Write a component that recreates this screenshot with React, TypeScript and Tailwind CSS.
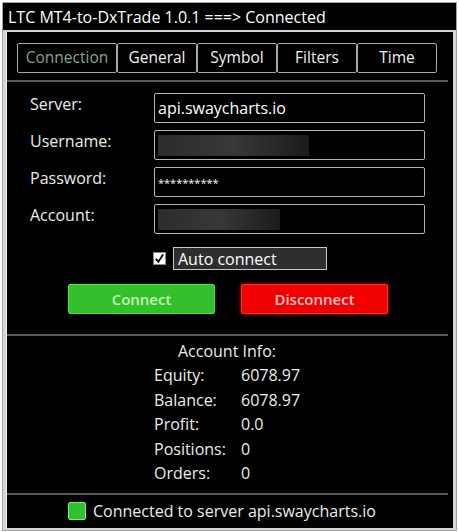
import React from 'react';

const tabs = ['Connection', 'General', 'Symbol', 'Filters', 'Time'];

const info = [
    ['Equity:', '6078.97'],
    ['Balance:', '6078.97'],
    ['Profit:', '0.0'],
    ['Positions:', '0'],
    ['Orders:', '0'],
];

function Field({ label, children }: { label: string; children?: React.ReactNode }) {
    return (
        <div className="flex items-start h-[30px]">
            <div className="w-[124px] text-[16px] leading-[22px] text-[#ececec]">{label}</div>
            <div className="w-[271px] h-[30px] border border-[#b4b4b4] rounded-[2px] bg-black flex items-center px-[3px] text-white text-[16px]">
                {children}
            </div>
        </div>
    );
}

function Hidden({ width }: { width: string }) {
    // redacted value in the original
    return <div className={`h-[21px] ${width} bg-gradient-to-r from-[#2c2c2c] via-[#383838] to-[#1c1c1c] blur-[0.6px]`} />;
}

export default function App() {
    return (
        <div className="min-h-screen bg-white p-[2px]" style={{ fontFamily: '"Open Sans", "DejaVu Sans", sans-serif' }}>
            <div className="w-[455px] h-[529px] border border-[#a4a4a4] bg-[#d6d6d6] flex flex-col">
                {/* Title bar */}
                <div className="h-[27px] bg-black text-white text-[16px] flex items-center pl-[5px] leading-none">
                    LTC MT4-to-DxTrade 1.0.1 ===&gt; Connected
                </div>

                {/* Main panel */}
                <div className="flex-1 ml-[3px] mr-[3px] mt-[2px] mb-[2px] bg-black border-l border-[#f0f0f0] flex flex-col">
                    {/* Tabs */}
                    <div className="flex pl-[10px] pt-[11px]">
                        {tabs.map((t, i) => (
                            <div
                                key={t}
                                className={`${i === 0 ? 'w-[100px] text-[#8aa68a]' : 'w-[80px] text-[#f2f2f2]'} shrink-0 h-[30px] border border-[#a8a8a8] rounded-[2px] flex items-center justify-center text-[15.5px]`}
                            >
                                {t}
                            </div>
                        ))}
                    </div>
                    <div className="mt-[7px] mr-[5px] h-[2px] bg-[#5a5a5a]" />

                    {/* Connection form */}
                    <div className="pl-[23px] pt-[11px] flex flex-col gap-[7px]">
                        <Field label="Server:">api.swaycharts.io</Field>
                        <Field label="Username:">
                            <Hidden width="w-[151px]" />
                        </Field>
                        <Field label="Password:">
                            <span className="text-[11px] leading-none">**********</span>
                        </Field>
                        <Field label="Account:">
                            <Hidden width="w-[122px]" />
                        </Field>
                    </div>

                    {/* Auto connect */}
                    <div className="flex items-center pl-[146px] mt-[13px] gap-[7px]">
                        <div className="w-[13px] h-[13px] bg-white border border-[#888] flex items-center justify-center">
                            <svg viewBox="0 0 12 12" className="w-[11px] h-[11px]">
                                <path d="M2 6.5 L4.8 9.5 L10 1.5" fill="none" stroke="black" strokeWidth="2" />
                            </svg>
                        </div>
                        <div className="w-[154px] h-[23px] border border-[#c8c8c8] bg-[#2e2e2e] text-white text-[16px] flex items-center pl-[4px]">
                            Auto connect
                        </div>
                    </div>

                    {/* Buttons */}
                    <div className="flex gap-[26px] pl-[61px] mt-[14px]">
                        <button className="w-[147px] h-[30px] rounded-[2px] bg-[#34c02c] border border-[#4ce040] text-[#c6f5b0] text-[15px] font-semibold">
                            Connect
                        </button>
                        <button className="w-[147px] h-[30px] rounded-[2px] bg-[#f00000] border border-[#ff3030] text-[#ffc4c4] text-[15px] font-semibold shadow-[0_0_4px_#c00000]">
                            Disconnect
                        </button>
                    </div>

                    <div className="mt-[20px] mr-[5px] h-[2px] bg-[#5a5a5a]" />

                    {/* Account info */}
                    <div className="flex flex-col text-[16px] text-[#ececec] pt-[2px]">
                        <div className="h-[25px] flex items-center justify-center pr-[6px]">Account Info:</div>
                        {info.map(([k, v]) => (
                            <div key={k} className="h-[24.5px] flex items-center pl-[147px]">
                                <span className="w-[87px]">{k}</span>
                                <span>{v}</span>
                            </div>
                        ))}
                    </div>

                    <div className="mt-[7px] mr-[5px] h-[2px] bg-[#5a5a5a]" />

                    {/* Status */}
                    <div className="flex-1 flex items-center pl-[61px] gap-[7px] text-[16px] text-[#ececec]">
                        <div className="w-[18px] h-[18px] rounded-[2px] bg-[#30c030] border border-[#7af07a]" />
                        <span>Connected to server api.swaycharts.io</span>
                    </div>
                </div>
            </div>
        </div>
    );
}
